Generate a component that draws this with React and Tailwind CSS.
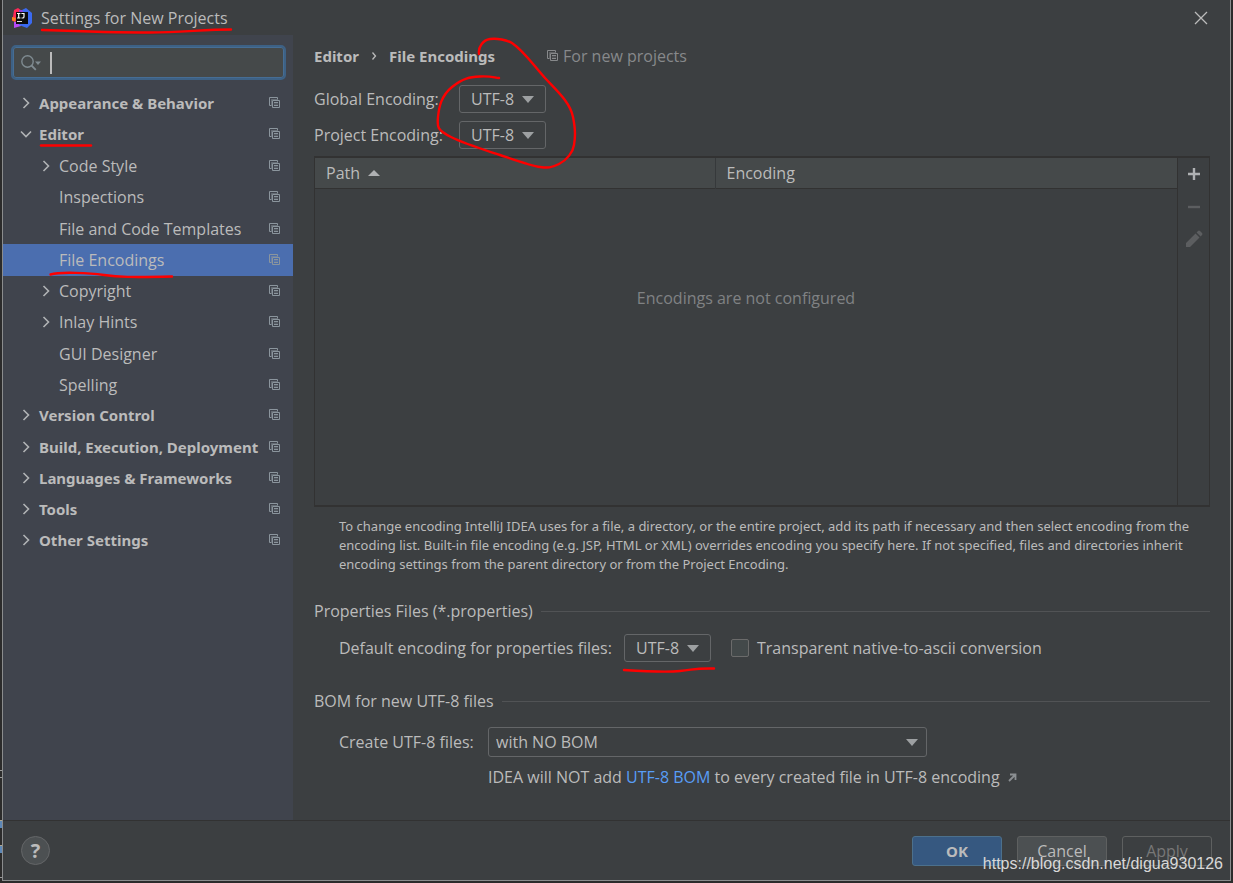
import React, { useState } from 'react';

const ENCODINGS = ['UTF-8', 'UTF-16', 'ISO-8859-1', 'US-ASCII', 'GBK'];

const TREE = [
  { label: 'Appearance & Behavior', level: 0, arrow: 'right' },
  { label: 'Editor', level: 0, arrow: 'down' },
  { label: 'Code Style', level: 1, arrow: 'right' },
  { label: 'Inspections', level: 1 },
  { label: 'File and Code Templates', level: 1 },
  { label: 'File Encodings', level: 1 },
  { label: 'Copyright', level: 1, arrow: 'right' },
  { label: 'Inlay Hints', level: 1, arrow: 'right' },
  { label: 'GUI Designer', level: 1 },
  { label: 'Spelling', level: 1 },
  { label: 'Version Control', level: 0, arrow: 'right' },
  { label: 'Build, Execution, Deployment', level: 0, arrow: 'right' },
  { label: 'Languages & Frameworks', level: 0, arrow: 'right' },
  { label: 'Tools', level: 0, arrow: 'right' },
  { label: 'Other Settings', level: 0, arrow: 'right' },
];

function Logo() {
  return (
    <svg width="20" height="20" viewBox="0 0 20 20" aria-hidden="true">
      <path d="M2 2 L6 0 L10 3 L8 14 L0 13 L1 9 Z" fill="#fe2857" />
      <path d="M0 9 L4 10 L3 14 L0 12 Z" fill="#fc801d" />
      <path d="M2 14 L8 13 L9 18 L2 20 Z" fill="#b74af7" />
      <path d="M8 3 L14 0 L20 5 L20 15 L15 20 L7 17 Z" fill="#3b6af0" />
      <path d="M7 2 L10 2 L12 5 L7 7 Z" fill="#8f42d8" />
      <rect x="4" y="4" width="12" height="12" fill="#0b0b0b" />
      <path d="M5 5.5h3.4M6.7 5.5v4.6M5 10h3.4M9.4 5.5h2.6v3.2q0 1.3-1.3 1.3h-1.2" fill="none" stroke="#fff" strokeWidth="1.2" />
      <rect x="5" y="13" width="5" height="1" fill="#ddd" />
    </svg>
  );
}

function CopyIcon({ className }) {
  return (
    <svg width="12" height="12" viewBox="0 0 12 12" fill="none" stroke="currentColor" className={className} aria-hidden="true">
      <path d="M2.5 8.5h-2v-8h8v2" />
      <path d="M2.5 8.5v-6h6" opacity="0.5" />
      <path d="M3.5 10.5v-7h7v7z" />
      <path d="M5 5.5h4M5 8.5h4" />
      <path d="M5 7h4" opacity="0.5" />
    </svg>
  );
}

function Chevron({ dir }) {
  return (
    <svg width="12" height="12" viewBox="0 0 12 12" fill="none" stroke="#b0b3b5" strokeWidth="1.6" aria-hidden="true">
      {dir === 'down' ? <path d="M1 3.5l5 5 5-5" /> : <path d="M3.5 1l5 5-5 5" />}
    </svg>
  );
}

function Select({ id, label, value, onChange, options, wide }) {
  return (
    <div className={wide ? 'relative w-[439px]' : 'relative w-[87px]'}>
      <select
        id={id}
        aria-label={label}
        value={value}
        onChange={(e) => onChange(e.target.value)}
        className={
          wide
            ? 'block h-[30px] w-full appearance-none rounded-[3px] border border-[#646668] bg-[#3c3f41] pl-[7px] pr-8 outline-none'
            : 'block h-7 w-full appearance-none rounded-[3px] border border-[#646668] bg-[#3c3f41] pl-[11px] pr-6 outline-none'
        }
      >
        {options.map((o) => (
          <option key={o}>{o}</option>
        ))}
      </select>
      <svg
        width="12"
        height="7"
        viewBox="0 0 12 7"
        className={wide ? 'pointer-events-none absolute right-[9px] top-3' : 'pointer-events-none absolute right-3 top-[11px]'}
        aria-hidden="true"
      >
        <path d="M0 0h12L6 7z" fill="#9da0a2" />
      </svg>
    </div>
  );
}

function SectionTitle({ children }) {
  return (
    <div className="flex h-5 items-center gap-2">
      <h2>{children}</h2>
      <div className="h-px flex-1 bg-[#515355]" />
    </div>
  );
}

function Sidebar() {
  const [query, setQuery] = useState('');
  const [selected, setSelected] = useState('File Encodings');

  return (
    <aside className="w-[290px] shrink-0 bg-[#40444d]">
      <div className="pl-2 pr-[7px] pt-[10px]">
        <label className="flex h-[35px] items-center rounded-[5px] border-2 border-[#3d6185] bg-[#45494a] pl-2 ring-1 ring-inset ring-[#466d94]">
          <svg width="20" height="16" viewBox="0 0 20 16" fill="none" stroke="#7f8b91" strokeWidth="1.4" aria-hidden="true">
            <circle cx="6.5" cy="6.5" r="5.7" />
            <path d="M10.5 10.5l4.3 4.3" strokeWidth="1.8" />
            <path d="M14 6.5h6l-3 3.5z" fill="#7f8b91" stroke="none" />
          </svg>
          <span className="ml-[9px] h-[22px] w-[2px] bg-[#bbbbbb]" />
          <input
            aria-label="Search settings"
            value={query}
            onChange={(e) => setQuery(e.target.value)}
            className="ml-1 min-w-0 flex-1 bg-transparent outline-none"
          />
        </label>
      </div>
      <ul className="mt-2 flex h-[469px] flex-col">
        {TREE.map((item) => (
          <li key={item.label} className="flex flex-1">
            <button
              type="button"
              onClick={() => setSelected(item.label)}
              className={`flex w-full items-center pr-3 text-left ${
                item.level ? 'pl-9' : "pb-[2px] pl-4 font-['Noto_Sans',sans-serif] text-[15px] font-bold"
              } ${item.label === selected ? 'bg-[#4b6eaf]' : ''}`}
            >
              <span className="flex w-5 shrink-0 pl-px">{item.arrow && <Chevron dir={item.arrow} />}</span>
              <span className="flex-1 whitespace-nowrap">{item.label}</span>
              <CopyIcon className="shrink-0 text-[#8b959d]" />
            </button>
          </li>
        ))}
      </ul>
    </aside>
  );
}

function EncodingTable() {
  return (
    <div className="mt-[7px] flex border border-t-2 border-b-2 border-[#323232]">
      <table className="flex-1 table-fixed border-collapse">
        <thead>
          <tr className="h-[30px] border-b border-[#323232] bg-[#45494a] text-left">
            <th className="w-[400px] border-r border-[#36393b] pl-[11px] font-normal">
              <span className="flex items-center gap-2">
                Path
                <svg width="12" height="6" viewBox="0 0 12 6" aria-hidden="true">
                  <path d="M0 6h12L6 0z" fill="#afb1b3" />
                </svg>
              </span>
            </th>
            <th className="pl-[11px] font-normal">Encoding</th>
          </tr>
        </thead>
        <tbody>
          <tr>
            <td colSpan={2} className="h-[317px] pt-[99px] text-center align-top text-[#808284]">
              Encodings are not configured
            </td>
          </tr>
        </tbody>
      </table>
      <div className="flex w-8 flex-col items-center gap-4 border-l border-[#323232] pt-2">
        <button type="button" aria-label="Add" className="text-[#afb1b3]">
          <svg width="16" height="16" viewBox="0 0 16 16" fill="none" stroke="currentColor" strokeWidth="2.4">
            <path d="M8 2v12M2 8h12" />
          </svg>
        </button>
        <button type="button" aria-label="Remove" disabled className="text-[#5c5e60]">
          <svg width="16" height="16" viewBox="0 0 16 16" fill="none" stroke="currentColor" strokeWidth="2.4">
            <path d="M2 9h12" />
          </svg>
        </button>
        <button type="button" aria-label="Edit" disabled className="text-[#5c5e60]">
          <svg width="18" height="18" viewBox="0 0 18 18" fill="currentColor">
            <path d="M1 17v-4L10.5 3.5l4 4L5 17zM11.6 2.4L13 1q1-1 2 0l2 2q1 1 0 2l-1.4 1.4z" />
          </svg>
        </button>
      </div>
    </div>
  );
}

// Freehand red pen marks drawn over the dialog
function PenMarks() {
  return (
    <svg
      width="1233"
      height="883"
      viewBox="0 0 1233 883"
      fill="none"
      stroke="#fe0000"
      strokeWidth="2.4"
      strokeLinecap="round"
      strokeLinejoin="round"
      className="pointer-events-none absolute left-0 top-0"
      aria-hidden="true"
    >
      <path d="M42 30C70 31 120 32.500 150 32.500S205 29.500 231 29.500" />
      <path d="M41 145.500H91" />
      <path d="M50.500 274.500C60 271.500 90 273 104 275S130 277.500 172 276.500" />
      <path d="M479 54C478 47 483 40 490 39S507 40 512 43C524 51 534 66 545 78S570 102 573 117S575 138 574 145S567 160 559 164S548 168 540 167S515 160 500 155S465 144 451 137S437 127 438 117S441 96 452 87S470 77 480 76.500S492 77 499 78" />
      <path d="M624 670C640 671 665 672.500 680 671S695 668 714 668.500" />
    </svg>
  );
}

// Bits of the editor window that show past the left edge of the dialog
function BackdropEdge() {
  return (
    <svg width="2" height="120" viewBox="0 0 2 120" className="pointer-events-none absolute bottom-0 left-0" aria-hidden="true">
      <path d="M0 7.5h2M0 14.500h2" stroke="#9a9a9a" />
      <path d="M0 58h2v7H0zM0 83h2v7H0z" fill="#5d88b8" />
      <path d="M0 57.500h2M0 82.500h2" stroke="#b0a890" />
      <path d="M0 114.500h2" stroke="#9a9a9a" />
    </svg>
  );
}

export default function App() {
  const [globalEnc, setGlobalEnc] = useState('UTF-8');
  const [projectEnc, setProjectEnc] = useState('UTF-8');
  const [propsEnc, setPropsEnc] = useState('UTF-8');
  const [bom, setBom] = useState('with NO BOM');
  const [ascii, setAscii] = useState(false);

  return (
    <div className="relative flex min-h-screen flex-col overflow-hidden bg-[#2b2b2b] px-[2px] pb-[2px] font-['Open_Sans','Noto_Sans',sans-serif] text-[16px] leading-5 text-[#bbbbbb]">
      <div className="flex flex-1 flex-col border border-t-0 border-[#8a8c8d] bg-[#3c3f41]">
        <header className="flex h-[35px] items-center pl-[9px] pr-[22px]">
          <Logo />
          <h1 className="ml-[9px] flex-1">Settings for New Projects</h1>
          <button type="button" aria-label="Close">
            <svg width="14" height="14" viewBox="0 0 14 14" fill="none" stroke="#bbbbbb" strokeWidth="1.3">
              <path d="M1 1l12 12M13 1L1 13" />
            </svg>
          </button>
        </header>

        <div className="flex flex-1">
          <Sidebar />
          <main className="min-w-0 flex-1 pl-[21px] pr-5 pt-[11px]">
            <div className="flex h-5 items-center">
              <span className="font-['Noto_Sans',sans-serif] text-[15px] font-bold">Editor</span>
              <svg width="6" height="10" viewBox="0 0 6 10" fill="none" stroke="#bbbbbb" strokeWidth="1.3" className="mx-3" aria-hidden="true">
                <path d="M1.500 1.500l3 3.500-3 3.500" />
              </svg>
              <span className="font-['Noto_Sans',sans-serif] text-[15px] font-bold">File Encodings</span>
              <span className="ml-[52px] flex items-center gap-1 text-[#87898b]">
                <CopyIcon />
                For new projects
              </span>
            </div>

            <div className="mt-[19px] grid grid-cols-[145px_1fr] items-center gap-y-2">
              <label htmlFor="global">Global Encoding:</label>
              <Select id="global" value={globalEnc} onChange={setGlobalEnc} options={ENCODINGS} />
              <label htmlFor="project">Project Encoding:</label>
              <Select id="project" value={projectEnc} onChange={setProjectEnc} options={ENCODINGS} />
            </div>

            <EncodingTable />

            <p className="mt-[10px] pl-[25px] font-['Noto_Sans',sans-serif] text-[13px] leading-[19px]">
              To change encoding IntelliJ IDEA uses for a file, a directory, or the entire project, add its path if necessary
              and then select encoding from the encoding list. Built-in file encoding (e.g. JSP, HTML or XML) overrides
              encoding you specify here. If not specified, files and directories inherit encoding settings from the parent
              directory or from the Project Encoding.
            </p>

            <div className="mt-[27px]">
              <SectionTitle>Properties Files (*.properties)</SectionTitle>
              <div className="mt-[13px] flex items-center pl-[25px]">
                <label htmlFor="props" className="w-[285px]">
                  Default encoding for properties files:
                </label>
                <Select id="props" value={propsEnc} onChange={setPropsEnc} options={ENCODINGS} />
                <label className="ml-5 flex items-center gap-2">
                  <input
                    type="checkbox"
                    checked={ascii}
                    onChange={(e) => setAscii(e.target.checked)}
                    className="h-[18px] w-[18px] appearance-none rounded-[2px] border border-[#6b6b6b] bg-[#43494a] checked:bg-[#4b6eaf]"
                  />
                  Transparent native-to-ascii conversion
                </label>
              </div>
            </div>

            <div className="mt-[29px]">
              <SectionTitle>BOM for new UTF-8 files</SectionTitle>
              <div className="mt-4 grid grid-cols-[149px_1fr] items-center gap-y-[10px] pl-[25px]">
                <label htmlFor="bom">Create UTF-8 files:</label>
                <Select
                  id="bom"
                  wide
                  value={bom}
                  onChange={setBom}
                  options={['with NO BOM', 'with BOM', 'with BOM under Windows, with no BOM otherwise']}
                />
                <p className="col-start-2 flex items-center">
                  <span>
                    IDEA will NOT add{' '}
                    <a href="#bom" className="text-[#589df6]">
                      UTF-8 BOM
                    </a>{' '}
                    to every created file in UTF-8 encoding
                  </span>
                  <svg width="9" height="9" viewBox="0 0 9 9" fill="none" stroke="#8b8f92" strokeWidth="1.8" className="ml-2" aria-hidden="true">
                    <path d="M2 1.500h5.500V7M7.500 1.500L1 8" />
                  </svg>
                </p>
              </div>
            </div>
          </main>
        </div>

        <footer className="flex h-[60px] items-center gap-[15px] border-t border-[#323232] pl-[18px] pr-[18px]">
          <button
            type="button"
            aria-label="Help"
            className="flex h-[29px] w-[29px] items-center justify-center rounded-full border border-[#646668] bg-[#4c5052] text-[20px] font-bold"
          >
            ?
          </button>
          <span className="flex-1" />
          <button type="button" className="h-[30px] w-[90px] rounded-[3px] border border-[#4c708c] bg-[#365880] font-['Noto_Sans',sans-serif] text-[15px] font-bold">
            OK
          </button>
          <button type="button" className="h-[30px] w-[90px] rounded-[3px] border border-[#5e6060] bg-[#4c5052]">
            Cancel
          </button>
          <button type="button" disabled className="h-[30px] w-[90px] rounded-[3px] border border-[#5e6060] text-[#777777]">
            Apply
          </button>
        </footer>
      </div>

      <BackdropEdge />
      <PenMarks />
      <div className="pointer-events-none absolute bottom-[9px] right-[10px] font-['Liberation_Sans',sans-serif] text-[16px] leading-5 text-[#d8d8d8]">
        https://blog.csdn.net/digua930126
      </div>
    </div>
  );
}
